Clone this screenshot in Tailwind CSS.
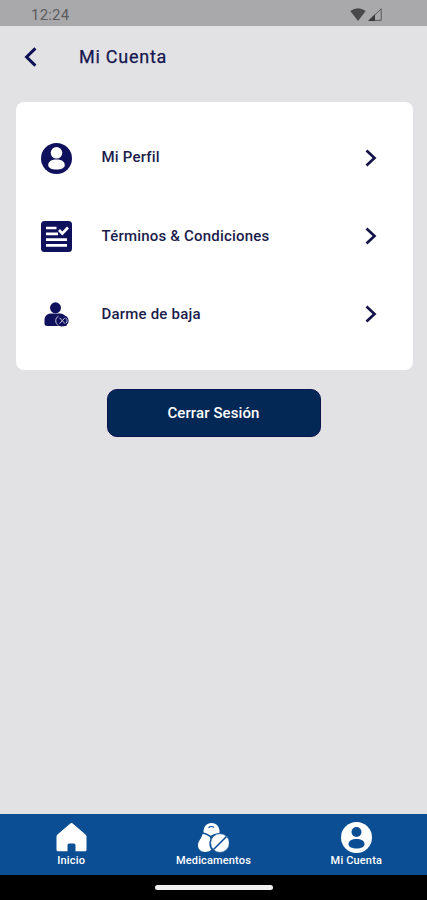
<!DOCTYPE html>
<html lang="es">
  <head>
    <meta charset="UTF-8" />
    <meta name="viewport" content="width=device-width, initial-scale=1.0" />
    <title>Mi Cuenta</title>
    <script src="https://cdn.jsdelivr.net/npm/@tailwindcss/browser@4"></script>
  </head>
  <body class="font-[Roboto,sans-serif] bg-[#e2e2e4]">
    <div class="flex flex-col h-[900px] w-[427px] overflow-hidden">
      <!-- status bar -->
      <div class="flex items-center justify-between h-[26px] shrink-0 bg-[#a9a9ab] pl-[31px] pr-[45px] pt-[3px] text-[#5c5c5e]">
        <span class="text-[15px] leading-none tracking-[0.2px] pt-px">12:24</span>
        <div class="flex items-center gap-[2px]">
          <svg class="w-4 h-[13px]" viewBox="0 0 16 13" fill="#49494b">
            <path d="M8 13 .3 3Q8-2.600 15.700 3z" />
          </svg>
          <svg class="w-[14px] h-[13px]" viewBox="0 0 14 13">
            <path d="M1.200 12.400 13.200.8V12.400z" fill="none" stroke="#58585a" />
            <path d="M0 13 7 6.200V13z" fill="#39393b" />
          </svg>
        </div>
      </div>

      <header class="flex items-center h-[76px] shrink-0 pl-6 pb-[15px] text-[#16174f]">
        <button aria-label="Volver">
          <svg class="w-[13px] h-5" viewBox="0 0 13 20" fill="none" stroke="#0d0f55" stroke-width="3">
            <path d="M11.400 1.400 2.600 10l8.800 8.600" />
          </svg>
        </button>
        <h1 class="ml-[42px] text-[18px] leading-none font-normal tracking-[0.75px] [-webkit-text-stroke:0.25px_#16174f]">Mi Cuenta</h1>
      </header>

      <main class="flex flex-col items-center grow">
        <ul class="w-[397px] h-[268px] ml-px rounded-lg bg-white py-[17px] pl-[25px] pr-9 text-[#1b1c4b] text-[15px] font-medium tracking-[0.2px]">
          <li class="flex items-center h-[78px]">
            <svg class="w-[31px] h-[31px]" viewBox="0 0 31 31">
              <circle cx="15.500" cy="15.500" r="15.500" fill="#10115c" />
              <circle cx="15.500" cy="9.800" r="5.800" fill="#fff" />
              <path d="M7.200 22.300c0-4 3.800-5.700 8.300-5.700s8.300 1.700 8.300 5.700c0 2.800-3.800 4.300-8.300 4.300s-8.300-1.500-8.300-4.300z" fill="#fff" />
            </svg>
            <span class="grow ml-[30px] -mt-px">Mi Perfil</span>
            <svg class="w-3 h-[18px]" viewBox="0 0 12 18" fill="none" stroke="#14144a" stroke-width="2.700">
              <path d="M1.500 1.500 9.500 9l-8 7.500" />
            </svg>
          </li>
          <li class="flex items-center h-[78px]">
            <svg class="w-[31px] h-[31px]" viewBox="0 0 31 31" fill="none" stroke="#fff" stroke-width="2.700">
              <rect width="31" height="31" rx="3.500" fill="#10115c" stroke="none" />
              <path d="M5 7h10.500M5 12.800h12M5 18.600h21M5 24.400h21" />
              <path d="m18 9 3.300 3.500 5.700-6" />
            </svg>
            <span class="grow ml-[30px]">Términos &amp; Condiciones</span>
            <svg class="w-3 h-[18px]" viewBox="0 0 12 18" fill="none" stroke="#14144a" stroke-width="2.700">
              <path d="M1.500 1.500 9.500 9l-8 7.500" />
            </svg>
          </li>
          <li class="flex items-center h-[78px]">
            <svg class="w-[31px] h-[31px]" viewBox="0 0 31 31">
              <circle cx="14.500" cy="8.800" r="5.500" fill="#10115c" />
              <path d="M3.500 21c0-4 2.500-6.500 7-6.500h8c4 0 6 2 7 6v6.500h-19c-2 0-3-.8-3-2.500z" fill="#10115c" />
              <ellipse cx="21" cy="21.700" rx="6.700" ry="5.800" fill="#10115c" />
              <g fill="none" stroke="#c3c3dc" stroke-width="1">
                <path d="M17.500 17c-3.700 2.200-3.700 7.400 0 9.500" />
                <path d="m18.500 18.700 5.500 6M24 18.700l-5.500 6" />
                <path d="M25 19.200c1.500 1.500 1.500 3.500 0 5" />
              </g>
            </svg>
            <span class="grow ml-[30px]">Darme de baja</span>
            <svg class="w-3 h-[18px]" viewBox="0 0 12 18" fill="none" stroke="#14144a" stroke-width="2.700">
              <path d="M1.500 1.500 9.500 9l-8 7.500" />
            </svg>
          </li>
        </ul>
        <button class="mt-[19px] w-[214px] h-12 rounded-[10px] bg-[#032856] border border-[#0b1350] text-white text-[15px] font-medium tracking-[0.1px]">
          Cerrar Sesión
        </button>
      </main>

      <!-- tab bar -->
      <nav class="grid grid-cols-3 h-[61px] shrink-0 bg-[#0b4e94] pt-2 text-white text-[11px] leading-none font-medium tracking-[0.15px]">
        <a class="flex flex-col items-center gap-[2px]">
          <svg class="w-[31px] h-[31px]" viewBox="0 0 31 31" fill="#fff">
            <path d="M14 1.700q1.500-1.300 3 0L29.500 12.500q1 1 1 2.300V27.700q0 1.500-1.500 1.500h-9.500v-6q0-1.700-1.700-1.700h-4.600q-1.700 0-1.700 1.700v6H2Q.5 29.200 .5 27.700V14.800q0-1.300 1-2.300z" />
          </svg>
          Inicio
        </a>
        <a class="flex flex-col items-center gap-[2px]">
          <svg class="w-[32px] h-[31px]" viewBox="0 0 32 31" fill="#fff">
            <!-- capsule -->
            <path d="M6.500 10.500C6.500 4.500 9.500 1 14.500 1c4.500 0 7.500 3 8 7.500.2 1.500 0 2.300-.5 2.800-3.500.2-6 .8-8.200 2.500-2.300-1.700-4.600-2.800-7.300-3.300z" />
            <path d="M5.600 12c2.600.3 5 1.300 7.400 3.200l.3 1.800c-1.500 4-1.300 7.300 1 10.800-1.800 1.700-3.900 2.200-6.300 2.200-4.300 0-7-2.800-7-6.700C1 19 4.600 16.500 5.600 12z" />
            <path d="M11.500 5.700c1.500-1.400 4-1.400 5.500-.1" fill="none" stroke="#0b4e94" stroke-width="1.300" />
            <!-- tablet -->
            <circle cx="23" cy="21" r="9.400" stroke="#0b4e94" stroke-width=".7" />
            <path d="m16.500 27.500 13-13" stroke="#0b4e94" stroke-width="1.600" />
          </svg>
          Medicamentos
        </a>
        <a class="flex flex-col items-center gap-[2px] pl-px">
          <svg class="w-[31px] h-[31px]" viewBox="0 0 31 31">
            <circle cx="15.500" cy="15.500" r="15.500" fill="#fff" />
            <circle cx="15.500" cy="10" r="5" fill="#0b4e94" />
            <path d="M7.500 22.300c0-3.800 3.500-5.300 8-5.300s8 1.500 8 5.300c0 2.800-3.500 4.200-8 4.200s-8-1.400-8-4.200z" fill="#0b4e94" />
          </svg>
          Mi Cuenta
        </a>
      </nav>
      <div class="flex justify-center h-[25px] shrink-0 bg-black pt-[10px]">
        <div class="w-[118px] h-[5px] rounded-full bg-[#f0f0f0]"></div>
      </div>
    </div>
  </body>
</html>
